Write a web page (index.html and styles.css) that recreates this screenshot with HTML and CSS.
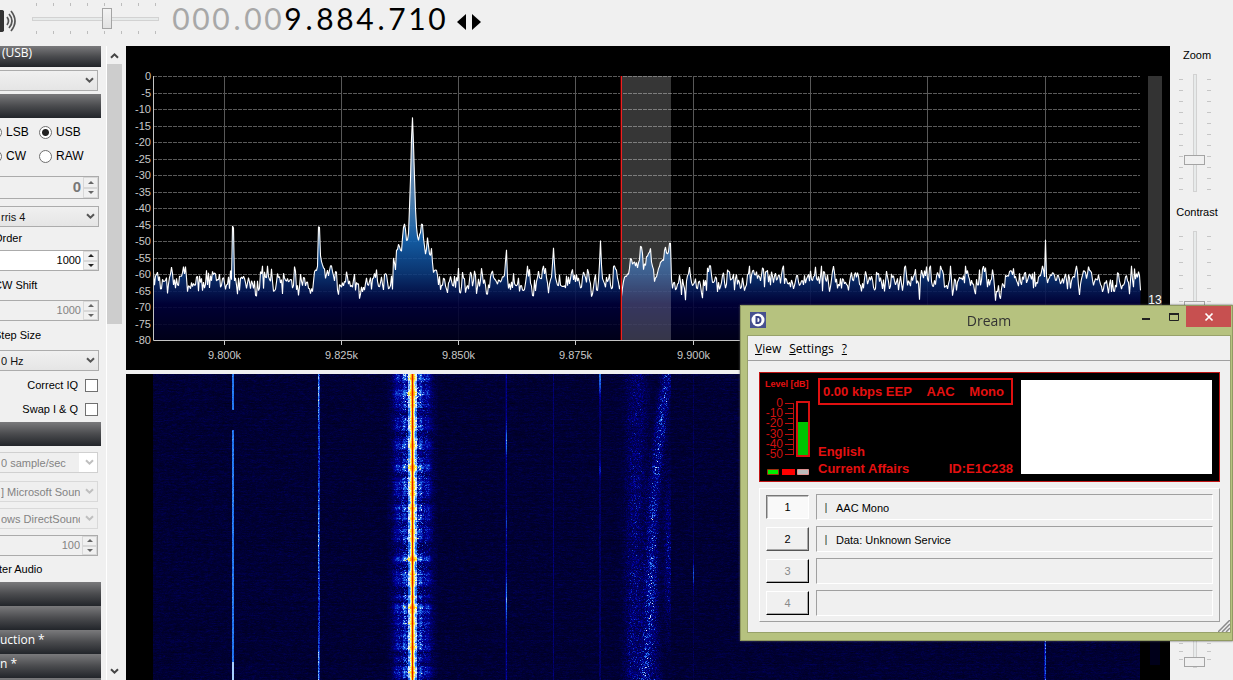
FILE: index.html
```html
<!DOCTYPE html>
<html lang="en">
<head>
<meta charset="utf-8">
<title>SDR receiver</title>
<link rel="stylesheet" href="styles.css">
</head>
<body>
<svg class="defs" width="0" height="0" aria-hidden="true">
  <symbol id="chev" viewBox="0 0 9 7"><path d="M1 1.2 4.5 4.7 8 1.2" fill="none" stroke="currentColor" stroke-width="2"/></symbol>
</svg>
<div class="app">
  <header class="toolbar">
    <button class="speaker" aria-label="Mute"><svg width="17" height="24" viewBox="0 0 17 24"><path d="M0 1h2.500l1.500 1v20l-1.500 1H0z" fill="#333"/><path d="M7 8q3 4 0 8M9 5q6 7 0 14M11 2q8 10 0 20" fill="none" stroke="#555" stroke-width="1.700"/></svg></button>
    <div class="volume"><input type="range" min="0" max="100" value="60" aria-label="Volume"></div>
    <div class="freq" aria-label="Frequency"><span class="off">0</span><span class="off">0</span><span class="off">0</span><span class="off dot">.</span><span class="off">0</span><span class="off">0</span><span>9</span><span class="dot">.</span><span>8</span><span>8</span><span>4</span><span class="dot">.</span><span>7</span><span>1</span><span>0</span></div>
    <div class="step">
      <button aria-label="Tune down"><svg width="10" height="16" viewBox="0 0 10 16"><path d="M9 0v16L0 8z"/></svg></button>
      <button aria-label="Tune up"><svg width="10" height="16" viewBox="0 0 10 16"><path d="M1 0v16l9-8z"/></svg></button>
    </div>
  </header>
  <main class="work">
    <aside class="side">
      <div class="panel">
        <h2 class="bar first">(USB)</h2>
        <div class="combo g3"><select aria-label="Source"><option></option></select><svg><use href="#chev"/></svg></div>
        <h2 class="bar g3"></h2>
        <div class="modes">
          <label><input type="radio" name="mode">LSB</label><label><input type="radio" name="mode" checked>USB</label>
          <label><input type="radio" name="mode">CW</label><label><input type="radio" name="mode">RAW</label>
        </div>
        <div class="spin big off"><input type="text" value="0" aria-label="Shift" disabled><div><button class="up" disabled aria-label="Up"></button><button class="down" disabled aria-label="Down"></button></div></div>
        <div class="combo wide g7"><select aria-label="Filter type"><option>rris 4</option></select><svg><use href="#chev"/></svg></div>
        <label class="cap short" for="order">Order</label>
        <div class="spin"><input id="order" type="text" value="1000"><div><button class="up" aria-label="Up"></button><button class="down" aria-label="Down"></button></div></div>
        <label class="cap" for="shift">CW Shift</label>
        <div class="spin off"><input id="shift" type="text" value="1000" disabled><div><button class="up" disabled aria-label="Up"></button><button class="down" disabled aria-label="Down"></button></div></div>
        <label class="cap" for="stepsize">Step Size</label>
        <div class="combo wide"><select id="stepsize"><option>0 Hz</option></select><svg><use href="#chev"/></svg></div>
        <div class="checks"><label>Correct IQ<input type="checkbox"></label><label>Swap I &amp; Q<input type="checkbox"></label></div>
        <h2 class="bar"></h2>
        <div class="combo off white g6"><select aria-label="Sample rate" disabled><option>0 sample/sec</option></select><svg><use href="#chev"/></svg></div>
        <div class="combo off g8"><select aria-label="Input" disabled><option>] Microsoft Soun</option></select><svg><use href="#chev"/></svg></div>
        <div class="combo off g6"><select aria-label="Output" disabled><option>ows DirectSound</option></select><svg><use href="#chev"/></svg></div>
        <div class="spin narrow off g6"><input type="text" value="100" aria-label="Latency" disabled><div><button class="up" aria-label="Up"></button><button class="down" aria-label="Down"></button></div></div>
        <div class="cap audio">ter Audio</div>
        <h2 class="bar"></h2><h2 class="bar"></h2><h2 class="bar">uction *</h2><h2 class="bar">n *</h2><h2 class="bar"></h2>
      </div>
    </aside>
    <div class="scroll">
      <button aria-label="Scroll up"><svg class="flip" width="9" height="7"><use href="#chev"/></svg></button>
      <div class="thumb"></div>
      <button aria-label="Scroll down"><svg width="9" height="7"><use href="#chev"/></svg></button>
    </div>
    <section class="graphs">
      <svg class="spectrum" id="spectrum" role="img" aria-label="Spectrum"></svg>
      <canvas class="fall" id="fall"></canvas>
    </section>
    <aside class="sliders">
      <label for="zoom">Zoom</label>
      <div class="vert t11"><input id="zoom" type="range" min="0" max="100" value="25"></div>
      <label for="contrast">Contrast</label>
      <div class="vert t13"><input id="contrast" type="range" min="0" max="100" value="35"></div>
      <div class="vert t8 last"><input type="range" min="0" max="100" value="0" aria-label="Offset"></div>
    </aside>
  </main>

  <section class="win">
    <div class="title">
      <svg width="16" height="16" viewBox="0 0 16 16"><path d="M0 0h16v16H0z" fill="#47508f"/><circle cx="8" cy="8" r="6.500" fill="#fff"/><path d="M6.500 5v6h1.700q2.300-.3 2.300-3T8.200 5z" fill="none" stroke="#3b4488" stroke-width="2"/></svg>
      <h1>Dream</h1>
      <div class="ctl">
        <button aria-label="Minimize"><svg width="10" height="10"><path d="M0 6h8v2H0z" fill="#222"/></svg></button>
        <button aria-label="Maximize"><svg width="10" height="10"><path d="M.5 1.500h9v7h-9z" fill="none" stroke="#222"/><path d="M0 1h10v2H0z" fill="#222"/></svg></button>
        <button class="close" aria-label="Close"><svg width="10" height="10"><path d="M1.500 1.500l7 7m0-7l-7 7" stroke="#fff" stroke-width="1.700"/></svg></button>
      </div>
    </div>
    <div class="client">
      <nav class="menu"><button><u>V</u>iew</button><button><u>S</u>ettings</button><button><u>?</u></button></nav>
      <div class="display">
        <div class="level"><b>Level [dB]</b>
          <svg width="46" height="86" viewBox="0 0 46 86">
            <g fill="#d01010" font-size="12" text-anchor="end"><text x="18" y="17">0</text><text x="18" y="27">-10</text><text x="18" y="37">-20</text><text x="18" y="48">-30</text><text x="18" y="58">-40</text><text x="18" y="68">-50</text></g>
            <path d="M28.500 13v52M20 13.500h8M20 23.500h8M20 33.500h8M20 44.500h8M20 54.500h8M20 64.500h8M23 18.500h5M23 28.500h5M23 39.500h5M23 49.500h5M23 59.500h5" stroke="#c01010" fill="none"/>
            <path d="M32 12h12v54H32z" fill="#000" stroke="#d81010" stroke-width="2"/><path d="M33 32h10v33H33z" fill="#00c400"/>
            <path d="M2.500 79.500h11v5h-11z" fill="#0e0" stroke="#a03010"/><path d="M17 79h13v6H17z" fill="#f00"/><path d="M32.500 79.500h11v5h-11z" fill="#bbb" stroke="#e09090"/>
          </svg>
        </div>
        <div class="info">
          <div class="rate"><span>0.00 kbps EEP</span><span>AAC</span><span>Mono</span></div>
          <div class="lang"><p>English</p><p><span>Current Affairs</span><span>ID:E1C238</span></p></div>
        </div>
        <div class="blank"></div>
      </div>
      <div class="services">
        <button class="on">1</button><div class="field"><i></i>AAC Mono</div>
        <button>2</button><div class="field"><i></i>Data: Unknown Service</div>
        <button disabled>3</button><div class="field"></div>
        <button disabled>4</button><div class="field"></div>
      </div>
      <svg class="grip" width="12" height="12"><path d="M0 12 12 0M4 12l8-8M8 12l4-4" stroke="#8a8a8a" stroke-width="1.500"/></svg>
    </div>
  </section>
</div>
<script src="graphs.js"></script>
</body>
</html>
```
FILE: styles.css
```css
* { box-sizing: border-box; }
body { margin: 0; background: #f0f0f0; color: #000; font: 11px/14px "Liberation Sans", Arial, sans-serif; }
button, input, select { font: inherit; color: inherit; margin: 0; padding: 0; border: 0; background: none; }
h1, h2, p { margin: 0; }
.defs { position: absolute; }
.app { position: relative; height: 100vh; display: flex; flex-direction: column; overflow: hidden; }

.toolbar { height: 46px; flex: none; display: flex; align-items: flex-start; }
.speaker { width: 32px; padding-top: 9px; text-align: left; }
.speaker svg { display: block; }
.volume { width: 127px; height: 38px; display: flex; align-items: center;
  background: repeating-linear-gradient(90deg, #bdbdbd 0 1px, transparent 1px 17px) 4px 3px / 120px 3px no-repeat,
    repeating-linear-gradient(90deg, #bdbdbd 0 1px, transparent 1px 17px) 4px 31px / 120px 3px no-repeat; }
input[type=range] { appearance: none; background: none; }
.volume input { width: 100%; height: 22px; }
input[type=range]::-webkit-slider-runnable-track { background: #e7eaea; border: 1px solid #d2d2d2; }
.volume input::-webkit-slider-runnable-track { height: 4px; }
.volume input::-webkit-slider-thumb { appearance: none; width: 10px; height: 21px; margin-top: -10px; background: linear-gradient(#f3f3f3, #e2e2e2); border: 1px solid #a4a4a4; }
.freq { display: flex; margin-left: 12px; font: 400 30px/37px Lato, sans-serif; }
.freq span { width: 20px; text-align: center; }
.freq .off { color: #a8a8a8; }
.freq .dot { width: 12px; }
.step { display: flex; gap: 4px; padding: 14px 0 0 10px; }
.step button { width: 10px; height: 16px; }
.step svg { display: block; }

.work { flex: 1; min-height: 0; display: grid; grid-template-columns: 101px 25px minmax(0, 1fr) 63px; }
.side { overflow: hidden; }
.panel { margin-left: -8px; }
.bar { height: 24px; padding-left: 8px; background: linear-gradient(#7a7a7c, #4a4b4e 50%, #22252a); color: #fff; font: 12px/20px "Open Sans", sans-serif; }
.bar.first { height: 21px; line-height: 14px; padding-left: 10px; }
.g3 { margin-top: 3px; }
.g6 { margin-top: 6px; }
.g7 { margin-top: 7px; }
.g8 { margin-top: 8px; }
.combo { display: grid; height: 21px; margin-right: 3px; color: #111; }
.combo.wide { margin-right: 2px; }
.combo select, .combo svg { grid-area: 1 / 1; }
.combo select { appearance: none; width: 100%; height: 21px; padding: 0 17px 0 8px; border: 1px solid #acacac; background: linear-gradient(#f0f0f0, #e5e5e5); opacity: 1; }
.combo svg { width: 9px; height: 7px; justify-self: end; align-self: center; margin-right: 4px; color: #555; pointer-events: none; }
.combo.off select { color: #838383; border-color: #d9d9d9; background: #efefef; }
.combo.off svg { color: #bfbfbf; }
.combo.white select { background: linear-gradient(90deg, #efefef 0 86px, #fff 86px); border-color: #d0d0d0; }
.modes { display: grid; grid-template-columns: 45px 1fr; padding: 2px 0 8px; }
.modes label { display: flex; align-items: center; gap: 4px; height: 24px; font-size: 12px; }
.modes label:nth-child(odd) { margin-left: -2px; }
.modes input { appearance: none; width: 13px; height: 13px; border: 1px solid #707070; border-radius: 50%; background: #fff; margin-left: 2px; }
.modes label:nth-child(odd) input { margin-left: -1px; }
.modes input:checked { background: radial-gradient(circle, #222 0 3px, #fff 4px); }
.spin { display: flex; height: 21px; margin-right: 2px; border: 1px solid #ababab; background: #fff; }
.spin input { flex: 1; min-width: 0; text-align: right; padding: 0 2px 2px 0; }
.spin > div { width: 15px; display: flex; flex-direction: column; }
.spin button { flex: 1; display: grid; place-items: center; border: 1px solid #d8d8d8; background: #f0f0f0; }
.spin button::before { content: ""; border: 3px solid transparent; }
.spin .up::before { border-width: 0 3px 3px; border-bottom-color: #222; }
.spin .down::before { border-width: 3px 3px 0; border-top-color: #222; }
.spin.off { background: #f0f0f0; color: #838383; }
.spin.off .up::before { border-bottom-color: #666; }
.spin.off .down::before { border-top-color: #666; }
.spin.narrow { margin-right: 3px; }
.spin.big { height: 23px; }
.spin.big input { font-size: 15px; font-weight: 700; color: #777; }
.cap { display: block; height: 29px; line-height: 29px; padding-left: 2px; }
.cap.short { height: 23px; line-height: 23px; }
.cap.audio { height: 26px; line-height: 26px; padding-left: 7px; }
.checks { padding: 2px 3px 1px 0; }
.checks label { height: 24px; display: flex; justify-content: flex-end; align-items: center; gap: 7px; }
.checks input { appearance: none; width: 13px; height: 13px; border: 1px solid #707070; background: #fff; }

.scroll { margin: 0 4px 0 5px; border-left: 1px solid #fff; display: flex; flex-direction: column; justify-content: space-between; }
.scroll button { height: 18px; color: #444; display: grid; place-items: center; }
.scroll .thumb { height: 260px; margin-bottom: auto; background: #cdcdcd; }
.flip { transform: rotate(180deg); }

.graphs { min-width: 0; min-height: 0; display: flex; flex-direction: column; gap: 4px; overflow: hidden; }
.spectrum { width: 100%; height: 324px; flex: none; background: #000; font: 11px "Liberation Sans", sans-serif; }
.fall { width: 100%; flex: 1; min-height: 0; background: #000020; }

.sliders { display: flex; flex-direction: column; align-items: center; padding: 2px 13px 12px 0; }
.sliders label { height: 14px; margin-bottom: 12px; padding-left: 4px; }
.sliders label:nth-of-type(2) { margin-top: 13px; }
.vert { --step: 11px; --t: repeating-linear-gradient(#c6c6c6 0 1px, transparent 1px var(--step));
  width: 32px; height: 118px; flex: none; display: flex; justify-content: center;
  background: var(--t) 0 5px / 4px 111px no-repeat, var(--t) 28px 5px / 4px 111px no-repeat; }
.vert.t13 { --step: 13px; }
.vert.t8 { --step: 8px; }
.vert.last { margin-top: auto; }
.vert input { writing-mode: vertical-lr; direction: rtl; width: 21px; height: 118px; }
.vert input::-webkit-slider-runnable-track { width: 4px; }
.vert input::-webkit-slider-thumb { appearance: none; width: 21px; height: 10px; margin-left: -10px; background: #f0f0f0; border: 1px solid #a4a4a4; }

.win { position: absolute; top: 305px; right: 0; width: 493px; border: 1px solid #909a62; background: #b6c27f; padding: 0 1px 7px 6px; box-shadow: 0 0 2px #555; }
.title { display: grid; grid-template-columns: 86px 1fr 86px; align-items: start; height: 29px; }
.title > svg { margin: 6px 0 0 3px; }
.title h1 { font: 14px/29px "Open Sans", sans-serif; color: #333; text-align: center; }
.ctl { display: grid; grid-template-columns: 14px 27px 45px; }
.ctl button { height: 21px; display: grid; place-items: center; }
.ctl button:first-child { justify-items: start; margin-left: -3px; }
.ctl button:nth-child(2) { justify-items: start; padding-left: 10px; }
.ctl .close { background: #c75050; }
.client { position: relative; border: 1px solid #98a26b; background: #f0f0f0; padding-bottom: 10px; }
.menu { height: 25px; display: flex; gap: 8px; padding-left: 7px; border-bottom: 1px solid #a0a0a0; font: 12px/23px "Open Sans", sans-serif; }
.display { display: grid; grid-template-columns: 46px 195px 1fr; margin: 11px 10px 0 11px; padding: 7px 7px 5px 5px; border: 1px solid #c01414; background: #000; color: #e41010; height: 110px; }
.level b { display: block; font-size: 9px; line-height: 8px; white-space: nowrap; padding-bottom: 2px; }
.level svg { display: block; }
.info { height: 99px; margin: -2px -7px 0 7px; display: flex; flex-direction: column; justify-content: space-between; font: 700 13px/17px "Liberation Sans", sans-serif; }
.rate { display: flex; justify-content: space-between; border: 2px solid #e01010; padding: 3px 7px 3px 3px; line-height: 17px; }
.lang p { display: flex; justify-content: space-between; }
.blank { background: #fff; height: 94px; margin-left: 15px; }
.services { display: grid; grid-template-columns: 43px 1fr; gap: 6px 7px; margin: 6px 10px 0 11px; padding: 5px 6px; border: 1px solid; border-color: #fff #a0a0a0 #a0a0a0 #fff; }
.services button { height: 24px; align-self: center; border: 1px solid; border-color: #fff #555 #555 #fff; box-shadow: inset -1px -1px #a8a8a8; }
.services button.on { background: #f9f9f9; border-color: #777 #fff #fff #777; box-shadow: inset 1px 1px #bbb; }
.services button:disabled { color: #8a8a8a; border-right-color: #000; border-bottom-color: #000; }
.field { height: 26px; border: 1px solid; border-color: #a0a0a0 #fff #fff #a0a0a0; display: flex; align-items: center; gap: 9px; padding: 1px 0 0 8px; }
.field i { width: 2px; height: 10px; background: linear-gradient(90deg, #b89a70 50%, #6f9fb8 50%); }
.grip { position: absolute; right: 0; bottom: 0; }
```
FILE: graphs.js
```javascript
let seed = 7;
const rnd = () => { seed = (seed * 1664525 + 1013904223) >>> 0; return seed / 4294967296; };
const gauss = () => rnd() + rnd() + rnd() + rnd() - 2;

// All x values are pixels from the left edge of the graph.
const LEFT = 27, TOP = 30, DB = 3.3, BASE = TOP + 80 * DB;
const shapes = [
  [[105, -62], [106, -45], [107, -46], [108, -62]],
  [[187, -61], [189, -59], [191, -58], [192, -46], [193, -46], [194, -54], [196, -57], [199, -60], [203, -60]],
  [[266, -65], [267, -55], [269, -59], [270, -53], [272, -51], [275, -53], [277, -45], [278, -43], [280, -51], [282, -48], [283, -40], [284, -31], [285, -20], [286, -13], [287, -20], [288, -31], [289, -40], [290, -45], [292, -50], [295, -44], [296, -46], [299, -54], [301, -51], [303, -54], [305, -53], [307, -60], [309, -58], [311, -61]],
  [[378, -61], [380, -52], [381, -60]],
  [[425, -61], [427, -52], [429, -61]],
  [[472, -62], [473, -57], [474, -50], [475, -57], [476, -62]],
  [[495, -66], [498, -61], [502, -60], [504, -55], [508, -57], [512, -57], [515, -51], [517, -58], [520, -55], [524, -53], [525, -56], [528, -62], [532, -58], [535, -57], [537, -55], [539, -52], [541, -54], [544, -52], [545, -62]],
  [[918, -62], [919, -49], [920, -61]]
];
function shapeAt(x) {
  for (const s of shapes) {
    if (x < s[0][0] || x > s[s.length - 1][0]) continue;
    for (let i = 1; i < s.length; i++) if (x <= s[i][0]) {
      const [a, p] = s[i - 1], [b, q] = s[i];
      return p + (q - p) * (x - a) / (b - a);
    }
  }
  return null;
}
function drawSpectrum() {
  const svg = document.getElementById('spectrum');
  const w = svg.clientWidth, right = w - 30;
  let grid = '', text = '';
  for (let d = 0; d <= 80; d += 5) {
    const y = Math.round(TOP + d * DB) + 0.5;
    if (d < 80) grid += `<path d="M${LEFT} ${y}H${right}" stroke="#5a5a5a" stroke-dasharray="4 1"/>`;
    text += `<text x="25" y="${y + 3.5}" text-anchor="end">${d ? '-' + d : '0'}</text>`;
  }
  for (let i = 0; 98 + i * 117.3 < right; i++) {
    const x = Math.floor(98 + i * 117.3) + 0.5;
    grid += `<path d="M${x} ${TOP}V${BASE}" stroke="#585858"/><path d="M${x} ${BASE}v5" stroke="#ccc"/>`;
    text += `<text x="${x}" y="313" text-anchor="middle">${(9.8 + i * 0.025).toFixed(3)}k</text>`;
  }
  const pts = [];
  let n = 0;
  for (let x = LEFT; x <= right; x++) {
    n = n * 0.4 + gauss() * 3.5;
    const s = shapeAt(x);
    const db = s === null ? -62 + Math.max(-7, Math.min(4.5, n)) : s + gauss() * 1.2;
    pts.push(`${x}.5 ${(TOP - db * DB).toFixed(1)}`);
  }
  const line = pts.join('L');
  svg.innerHTML = `<defs><linearGradient id="g" gradientUnits="userSpaceOnUse" x1="0" y1="70" x2="0" y2="${BASE}">
    <stop offset="0" stop-color="#a8b8d0"/><stop offset=".4" stop-color="#4e88c0"/><stop offset=".55" stop-color="#1668b8"/><stop offset=".7" stop-color="#0c3c80"/><stop offset=".84" stop-color="#00003c"/><stop offset="1" stop-color="#00001c"/></linearGradient></defs>
    ${grid}<path d="M${LEFT} ${BASE}L${line}L${right} ${BASE}z" fill="url(#g)" fill-opacity=".88"/>
    <rect x="496" y="${TOP}" width="49" height="${BASE - TOP}" fill="#fff" fill-opacity=".21"/>
    <path d="M${line}" fill="none" stroke="#fff" stroke-width="1.1" stroke-linejoin="bevel"/>
    <path d="M${LEFT}.5 ${TOP}V${BASE}.5H${right}" fill="none" stroke="#c4c4c4"/>
    <rect x="494" y="${TOP}" width="1" height="${BASE - TOP}" fill="#500"/>
    <rect x="495" y="${TOP}" width="1" height="${BASE - TOP}" fill="#f02020"/>
    <path d="M${w - 22} ${TOP}h14V294h-14z" fill="#333"/>
    <g fill="#c8c8c8">${text}<text x="${w - 15}" y="258" text-anchor="middle" fill="#fff" font-size="12">13</text></g>`;
}

const stops = [[0, 0, 0, 12], [0.12, 0, 0, 52], [0.3, 0, 0, 160], [0.5, 35, 125, 245], [0.68, 235, 250, 255], [0.8, 255, 235, 30], [0.9, 255, 120, 0], [1, 225, 0, 0]];
function colour(v) {
  v = Math.max(0, Math.min(1, v));
  let i = 1;
  while (v > stops[i][0]) i++;
  const a = stops[i - 1], b = stops[i], t = (v - a[0]) / (b[0] - a[0]);
  return [1, 2, 3].map(k => a[k] + (b[k] - a[k]) * t);
}
const bump = (x, c, s) => Math.exp(-((x - c) ** 2) / (2 * s * s));
function drawFall() {
  const c = document.getElementById('fall');
  const w = c.width = c.clientWidth, h = c.height = c.clientHeight;
  const ctx = c.getContext('2d'), img = ctx.createImageData(w, h);
  let loud = 0.5;
  for (let y = 0; y < h; y++) {
    loud = loud * 0.75 + 0.25 * (0.45 + 1.1 * gauss());
    const pulse = Math.max(0, Math.min(1.2, loud + 0.35 * Math.sin(y / 2.6) * Math.sin(y / 9)));
    const row = gauss() * 0.01;
    let soft = 0;
    for (let x = 0; x < w; x++) {
      soft = soft * 0.5 + gauss() * 0.028;
      let v = 0.118 + row + soft;
      if (x === 106 || x === 107) v = y > 35 && y < 56 ? v : y > 287 ? 0.62 : 0.49 + gauss() * 0.03;
      if (x === 192) v = 0.44 + 0.1 * Math.sin(y / 23 + 1) + gauss() * 0.12;
      if (x === 193) v = 0.38 + gauss() * 0.08;
      if (x === 380) v = 0.27 + 0.26 * bump(y, 67, 9) + 0.1 * bump(y, 150, 10) + 0.26 * bump(y, 225, 14) + gauss() * 0.05;
      if (x === 379) v = 0.17 + 0.12 * bump(y, 67, 9) + 0.12 * bump(y, 225, 14);
      if (x === 427) v = 0.22 + gauss() * 0.04;
      if (x === 473 || x === 474) v = 0.2 + 0.28 * bump(y, 3, 12) + 0.15 * bump(y, 95, 5) + gauss() * 0.04;
      if (x === 567) v = 0.17 + 0.25 * bump(y, 200, 9) + gauss() * 0.04;
      if (x === 919) v = 0.42 + gauss() * 0.12;
      if (x === 918) v = 0.3 + gauss() * 0.06;
      const d = Math.abs(x - 286);
      if (d < 26) {
        const lobe = 0.34 * bump(d, 8, 1.5) + 0.2 * bump(d, 15, 3) + 0.2 * bump(d, 4, 1.5);
        v += lobe * pulse + 0.05 * bump(d, 8, 10) + Math.max(0, gauss()) * (0.2 * bump(d, 8, 8) + 0.12 * bump(d, 4, 2));
        if (d < 5) v = Math.max(v, 0.46 + pulse * 0.28 + gauss() * 0.06);
        if (d < 3) v = Math.max(v, 0.62 + pulse * 0.2 + gauss() * 0.04);
        if (d < 2) v = 0.79 + pulse * 0.09;
        if (d === 0) v = 0.98;
      }
      if (x > 488 && x < 545) {
        const p = y / 306;
        const band = bump(x, 541 - 26 * p - 3 * Math.sin(p * 5), 4) + 0.45 * bump(x, 514 - 6 * p, 6)
          + 0.7 * bump(x, 542, 3) * bump(p, 0.58, 0.17) + 0.25 * bump(x, 504, 5) + 0.9 * bump(x, 529, 4) * Math.max(0, p - 0.45);
        v += band * (0.1 + Math.max(0, gauss()) * 0.3);
      }
      let rgb = colour(v);
      if (x < LEFT || x >= w - 30) rgb = x > w - 21 && x < w - 10 && y < 291 ? [0, 0, 26] : [0, 0, 0];
      const i = (y * w + x) * 4;
      img.data[i] = rgb[0]; img.data[i + 1] = rgb[1]; img.data[i + 2] = rgb[2]; img.data[i + 3] = 255;
    }
  }
  ctx.putImageData(img, 0, 0);
}
function draw() { seed = 7; drawSpectrum(); drawFall(); }
draw();
addEventListener('resize', draw);
```
